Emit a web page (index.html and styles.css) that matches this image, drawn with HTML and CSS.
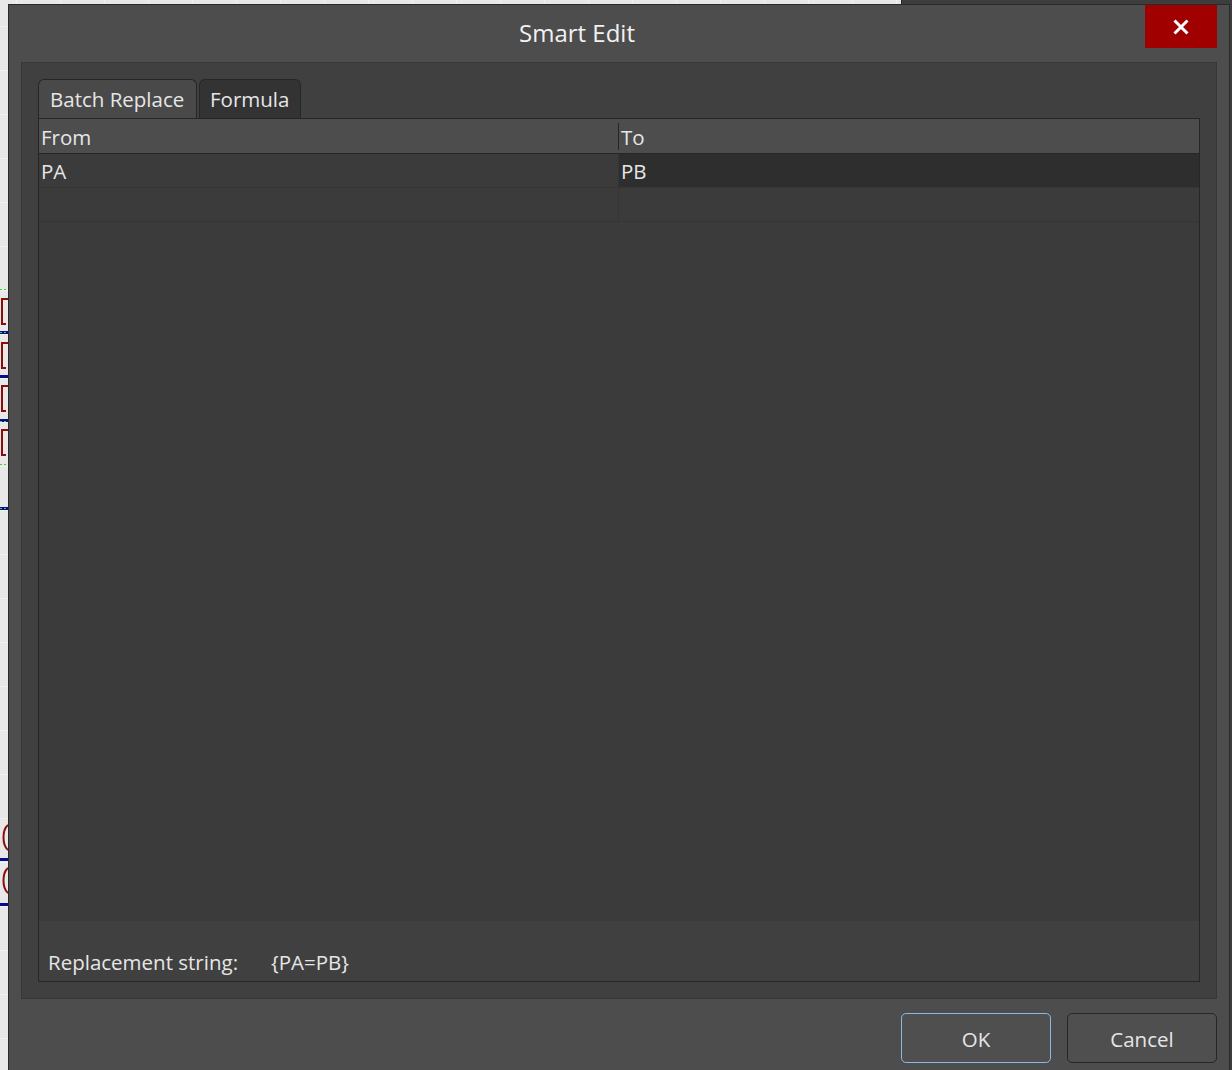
FILE: index.html
```html
<!DOCTYPE html>
<html lang="en">
<head>
    <meta charset="UTF-8">
    <meta name="viewport" content="width=device-width, initial-scale=1.0">
    <title>Smart Edit</title>
    <link rel="stylesheet" href="styles.css">
</head>
<body>
    <div class="desktop">
        <!-- bits of the schematic sheet peeking out on the left -->
        <svg class="sheet-edge" width="8" height="1070" viewBox="0 0 8 1070">
            <g fill="none" stroke="#8b0a0a" stroke-width="2">
                <path d="M8 299 H2 V324 H6"/>
                <path d="M8 343 H2 V368 H6"/>
                <path d="M8 386 H2 V411 H6"/>
                <path d="M8 430 H2 V455 H6"/>
                <path d="M8 825 C2 830 2 845 8 850"/>
                <path d="M8 868 C2 873 2 888 8 893"/>
            </g>
            <g fill="#0a0a8c">
                <rect x="0" y="331" width="8" height="3"/>
                <rect x="0" y="375" width="8" height="3"/>
                <rect x="0" y="419" width="8" height="3"/>
                <rect x="0" y="507" width="8" height="3"/>
                <rect x="0" y="858" width="8" height="3"/>
                <rect x="0" y="903" width="8" height="3"/>
            </g>
            <g stroke="#3ad43a" stroke-width="1" stroke-dasharray="2 2">
                <path d="M0 289.5 H8"/>
                <path d="M0 332.5 H8"/>
                <path d="M0 421.5 H8"/>
                <path d="M0 464.5 H8"/>
                <path d="M0 508.5 H8"/>
            </g>
        </svg>
        <div class="side-window"></div>

        <div class="dialog">
            <div class="dialog-titlebar">
                <div class="dialog-title">Smart Edit</div>
                <button class="close-btn" aria-label="Close">
                    <svg width="16" height="16" viewBox="0 0 16 16">
                        <path d="M1.5 1.5 L14.5 14.5 M14.5 1.5 L1.5 14.5" stroke="#fff" stroke-width="3" fill="none"/>
                    </svg>
                </button>
            </div>

            <div class="panel">
                <div class="tabs">
                    <div class="tab tab-active">Batch Replace</div>
                    <div class="tab tab-formula">Formula</div>
                </div>

                <div class="grid">
                    <div class="grid-header">
                        <div class="cell cell-from">From</div>
                        <div class="cell">To</div>
                    </div>
                    <div class="grid-row">
                        <div class="cell cell-from">PA</div>
                        <div class="cell cell-selected">PB</div>
                    </div>
                    <div class="grid-row">
                        <div class="cell cell-from"></div>
                        <div class="cell"></div>
                    </div>
                    <div class="grid-fill"></div>
                    <div class="grid-footer">
                        <span class="footer-label">Replacement string:</span>
                        <span class="footer-value">{PA=PB}</span>
                    </div>
                </div>
            </div>

            <div class="dialog-buttons">
                <button class="btn btn-default">OK</button>
                <button class="btn">Cancel</button>
            </div>
        </div>
    </div>
</body>
</html>
```

FILE: styles.css
```css
* {
    box-sizing: border-box;
}

body {
    margin: 0;
    overflow: hidden;
    font-family: "Open Sans", "Noto Sans", sans-serif;
    color: #e6e6e6;
}

/* Desktop behind the dialog */
.desktop {
    position: relative;
    width: 1232px;
    height: 1070px;
    overflow: hidden;
    background-color: #e8e8e8;
    background-image:
        linear-gradient(to right, #f1f1f1 1px, transparent 1px),
        linear-gradient(to bottom, #f1f1f1 1px, transparent 1px);
    background-size: 44px 44px;
    background-position: 16px 26px;
}

.sheet-edge {
    position: absolute;
    left: 0;
    top: 0;
}

.side-window {
    position: absolute;
    left: 901px;
    top: 0;
    right: 0;
    bottom: 0;
    background-color: #3d3d3d;
    border-left: 1px solid #262626;
}

/* The dialog window */
.dialog {
    position: absolute;
    left: 8px;
    top: 4px;
    width: 1222px;
    height: 1080px;
    background-color: #4d4d4d;
    border: 1px solid #2a2a2a;
}

.dialog-titlebar {
    display: flex;
    align-items: flex-start;
    height: 57px;
}

.dialog-title {
    flex: 1;
    text-align: center;
    font-size: 24px;
    line-height: 56px;
    color: #f2f2f2;
}

.close-btn {
    display: flex;
    align-items: center;
    justify-content: center;
    width: 72px;
    height: 43px;
    margin-right: 12px;
    padding: 0;
    border: none;
    background-color: #a00000;
    cursor: pointer;
}

/* Main panel with the tabs */
.panel {
    display: flex;
    flex-direction: column;
    height: 937px;
    margin: 0 12px;
    padding: 16px;
    background-color: #404040;
    border: 1px solid #373737;
}

.tabs {
    display: flex;
    gap: 2px;
    height: 39px;
}

.tab {
    height: 39px;
    padding: 0 10px;
    font-size: 20.5px;
    line-height: 39px;
    background-color: #333333;
    border: 1px solid #262626;
    border-bottom: none;
    border-radius: 6px 6px 0 0;
    white-space: nowrap;
}

.tab-active {
    width: 159px;
    padding-left: 11px;
    background-color: #494949;
}

.tab-formula {
    width: 102px;
}

/* Replace table */
.grid {
    flex: 1;
    display: flex;
    flex-direction: column;
    background-color: #3b3b3b;
    border: 1px solid #262626;
}

.grid-header,
.grid-row {
    display: flex;
    font-size: 20.5px;
}

.grid-header {
    height: 35px;
    line-height: 36px;
    background-color: #4d4d4d;
    border-bottom: 1px solid #262626;
}

.grid-row {
    height: 34px;
    line-height: 35px;
    border-bottom: 1px solid #353535;
}

.cell {
    flex: 1;
    height: 100%;
    padding-left: 2px;
    position: relative;
}

.cell-from {
    flex: none;
    width: 580px;
    border-right: 1px solid #353535;
}

.grid-header .cell-from {
    border-right: none;
}

/* short divider between the header captions */
.grid-header .cell-from::after {
    content: "";
    position: absolute;
    right: 0;
    top: 4px;
    bottom: 3px;
    width: 1px;
    background-color: #262626;
}

.cell-selected {
    background-color: #2e2e2e;
}

.grid-fill {
    flex: 1;
}

.grid-footer {
    display: flex;
    height: 60px;
    padding: 26px 0 0 9px;
    font-size: 20.5px;
    line-height: 30px;
    background-color: #404040;
}

.footer-label {
    width: 223px;
}

/* OK / Cancel */
.dialog-buttons {
    display: flex;
    justify-content: flex-end;
    gap: 16px;
    margin: 14px 12px 0 0;
}

.btn {
    width: 150px;
    height: 50px;
    padding: 2px 0 0;
    font-family: inherit;
    font-size: 20.5px;
    color: #e6e6e6;
    background-color: #4f4f4f;
    border: 1px solid #262626;
    border-radius: 5px;
    cursor: pointer;
}

.btn-default {
    border-color: #8cb8e8;
}
```
